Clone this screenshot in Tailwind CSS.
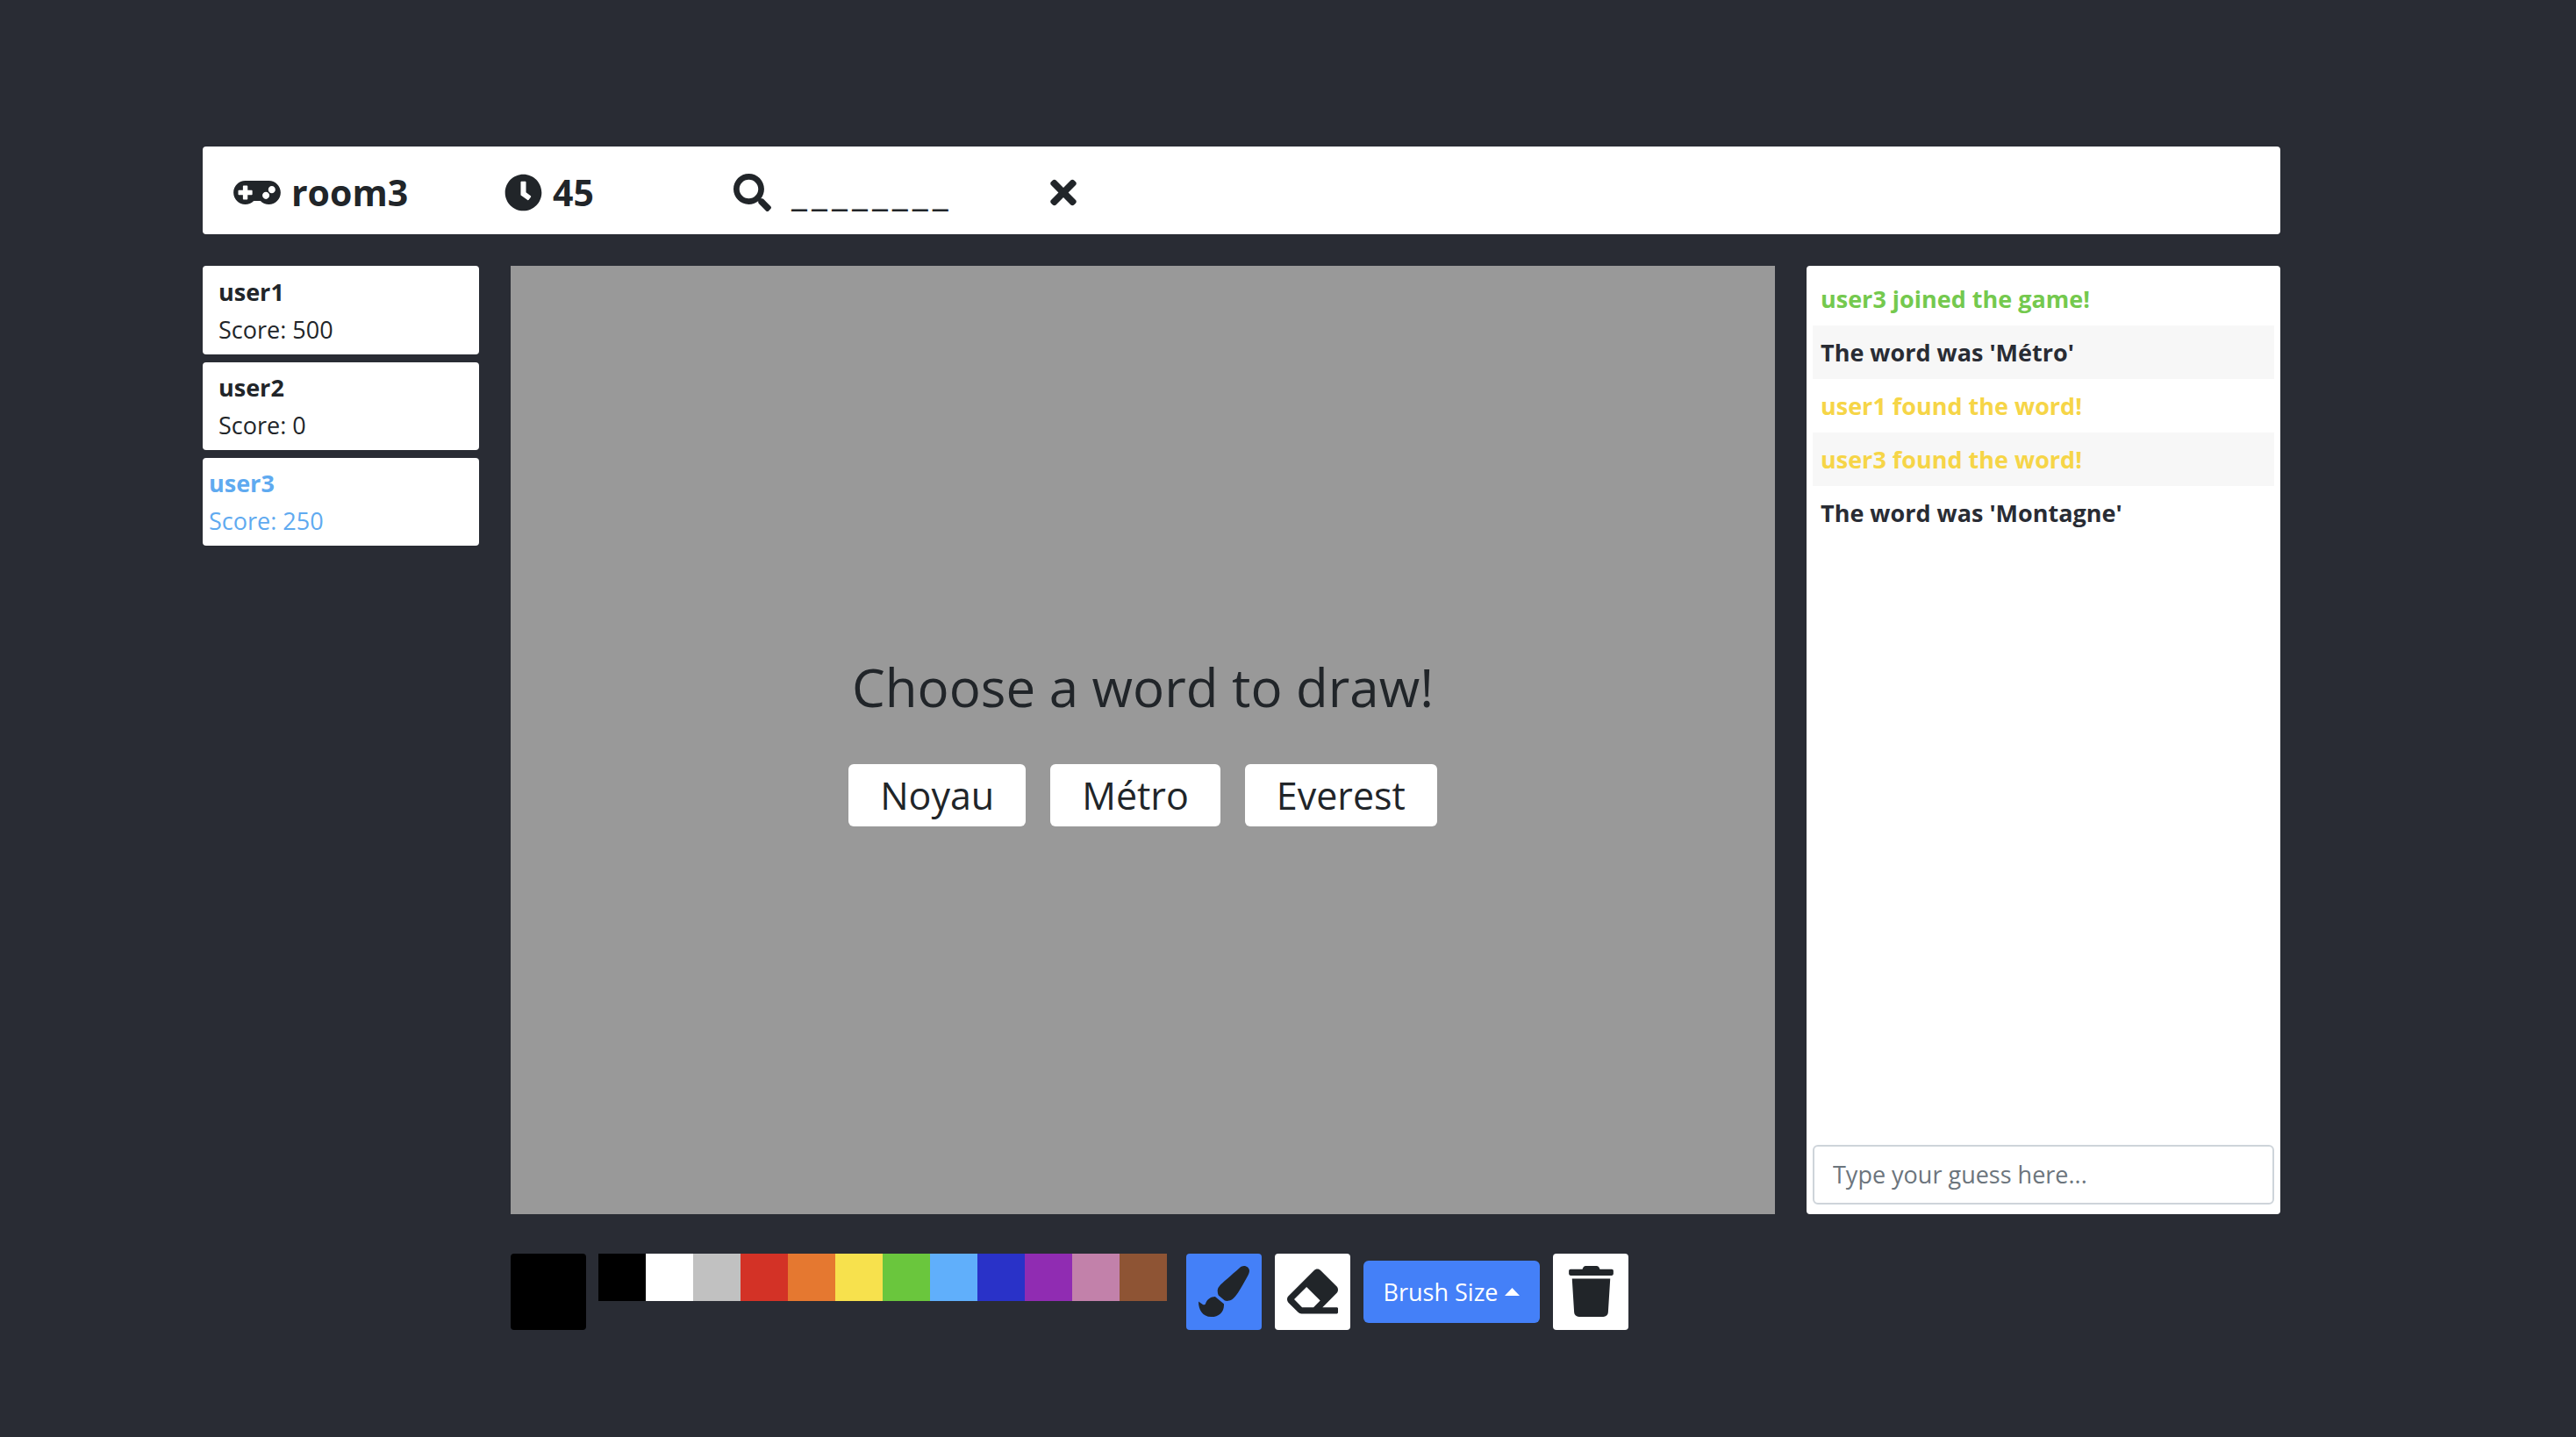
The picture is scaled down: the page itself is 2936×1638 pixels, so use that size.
<!DOCTYPE html>
<html lang="en">
<head>
<meta charset="utf-8">
<meta name="viewport" content="width=device-width, initial-scale=1">
<title>room3</title>
<script src="https://cdn.jsdelivr.net/npm/@tailwindcss/browser@4"></script>
</head>
<body class="min-h-screen bg-[#292c34] pt-[167px] pr-[337px] pb-[122px] pl-[231px] font-['Open_Sans','Noto_Sans',sans-serif] text-[27px] leading-[43px] text-[#212529]">

  <header class="mb-9 grid h-[100px] grid-cols-[309px_261px_361px_1fr] items-center rounded bg-white pt-1 pl-[35px] text-[41px] font-bold">
    <h1 class="flex items-center gap-3">
      <svg class="h-[43px] w-[54px]" viewBox="0 0 640 512" fill="currentColor" aria-hidden="true"><path d="M480 96H160C71.600 96 0 167.600 0 256s71.600 160 160 160c44.800 0 85.200-18.400 114.200-48h91.500c29 29.600 69.500 48 114.200 48 88.400 0 160-71.600 160-160S568.400 96 480 96zM256 276c0 6.600-5.400 12-12 12h-52v52c0 6.600-5.400 12-12 12h-40c-6.600 0-12-5.400-12-12v-52H76c-6.600 0-12-5.400-12-12v-40c0-6.600 5.400-12 12-12h52v-52c0-6.600 5.400-12 12-12h40c6.600 0 12 5.400 12 12v52h52c6.600 0 12 5.400 12 12v40zm184 68c-26.500 0-48-21.500-48-48s21.500-48 48-48 48 21.500 48 48-21.500 48-48 48zm80-80c-26.500 0-48-21.500-48-48s21.500-48 48-48 48 21.500 48 48-21.500 48-48 48z"/></svg>
      room3
    </h1>
    <div class="flex items-center gap-3">
      <svg class="size-[43px]" viewBox="0 0 512 512" fill="currentColor" aria-hidden="true"><path d="M256 8C119 8 8 119 8 256s111 248 248 248 248-111 248-248S393 8 256 8zm57.100 350.100L224.900 294c-3.100-2.300-4.900-5.900-4.900-9.700V116c0-6.600 5.400-12 12-12h48c6.600 0 12 5.400 12 12v137.700l63.500 46.200c5.400 3.900 6.500 11.400 2.600 16.800l-28.200 38.800c-3.900 5.300-11.400 6.500-16.800 2.600z"/></svg>
      <span>45</span>
    </div>
    <div class="flex items-center gap-[23px]">
      <svg class="size-[43px]" viewBox="0 0 512 512" fill="currentColor" aria-hidden="true"><path d="M505 442.700L405.300 343c-4.500-4.500-10.600-7-17-7H372c27.600-35.300 44-79.700 44-128C416 93.100 322.900 0 208 0S0 93.100 0 208s93.100 208 208 208c48.300 0 92.700-16.400 128-44v16.300c0 6.400 2.500 12.500 7 17l99.700 99.700c9.400 9.400 24.600 9.400 33.900 0l28.300-28.300c9.400-9.400 9.400-24.600.1-34zM208 336c-70.700 0-128-57.200-128-128 0-70.700 57.200-128 128-128 70.700 0 128 57.200 128 128 0 70.700-57.200 128-128 128z"/></svg>
      <div class="flex gap-[5px] font-normal">
        <span>_</span><span>_</span><span>_</span><span>_</span><span>_</span><span>_</span><span>_</span><span>_</span>
      </div>
    </div>
    <button type="button" aria-label="Leave room" class="w-fit">
      <svg class="h-[43px] w-[30px]" viewBox="0 0 352 512" fill="currentColor" aria-hidden="true"><path d="M242.720 256l100.070-100.070c12.280-12.280 12.280-32.190 0-44.480l-22.240-22.240c-12.280-12.280-32.190-12.280-44.480 0L176 189.280 75.930 89.210c-12.280-12.280-32.190-12.280-44.480 0L9.210 111.450c-12.280 12.280-12.280 32.190 0 44.480L109.280 256 9.210 356.070c-12.280 12.280-12.280 32.190 0 44.480l22.240 22.240c12.280 12.280 32.200 12.280 44.480 0L176 322.720l100.070 100.070c12.280 12.280 32.200 12.280 44.480 0l22.240-22.240c12.280-12.280 12.280-32.190 0-44.480L242.720 256z"/></svg>
    </button>
  </header>

  <main class="grid grid-cols-[315px_1fr_540px] gap-x-9 gap-y-[45px]">
    <ul class="flex flex-col gap-[9px]">
      <li class="rounded bg-white px-[18px] pt-2 pb-[7px]"><p class="font-bold">user1</p><p>Score: 500</p></li>
      <li class="rounded bg-white px-[18px] py-[7px]"><p class="font-bold">user2</p><p>Score: 0</p></li>
      <li class="rounded bg-white px-[7px] py-[7px] text-[#5faaf0]"><p class="font-bold">user3</p><p>Score: 250</p></li>
    </ul>

    <section class="flex aspect-[4/3] flex-col items-center justify-center gap-[50px] bg-[#999]">
      <h2 class="text-[60px] leading-[76px]">Choose a word to draw!</h2>
      <div class="flex gap-7">
        <button type="button" class="h-[71px] rounded-md bg-white px-9 text-[43px]">Noyau</button>
        <button type="button" class="h-[71px] rounded-md bg-white px-9 text-[43px]">Métro</button>
        <button type="button" class="h-[71px] rounded-md bg-white px-9 text-[43px]">Everest</button>
      </div>
    </section>

    <aside class="flex flex-col justify-between rounded bg-white px-[7px] pt-[7px] pb-[11px]">
      <ul class="font-bold">
        <li class="px-[9px] py-[9px] text-[#74c94e]">user3 joined the game!</li>
        <li class="bg-[#f7f7f7] px-[9px] py-[9px] text-[#292c34]">The word was 'Métro'</li>
        <li class="px-[9px] py-[9px] text-[#f6d547]">user1 found the word!</li>
        <li class="bg-[#f7f7f7] px-[9px] py-[9px] text-[#f6d547]">user3 found the word!</li>
        <li class="px-[9px] py-[9px] text-[#292c34]">The word was 'Montagne'</li>
      </ul>
      <input type="text" aria-label="Your guess" placeholder="Type your guess here..." class="h-[68px] w-full rounded-md border-2 border-[#ced4da] px-[21px] placeholder:text-[#6c757d]">
    </aside>

    <div class="col-start-2 flex items-start">
      <div class="mr-[14px] h-[87px] w-[86px] rounded bg-black"></div>
      <div class="mr-[22px] flex">
        <button type="button" aria-label="Black" class="size-[54px] bg-black"></button>
        <button type="button" aria-label="White" class="size-[54px] bg-white"></button>
        <button type="button" aria-label="Gray" class="size-[54px] bg-[#c1c1c1]"></button>
        <button type="button" aria-label="Red" class="size-[54px] bg-[#d33226]"></button>
        <button type="button" aria-label="Orange" class="size-[54px] bg-[#e57830]"></button>
        <button type="button" aria-label="Yellow" class="size-[54px] bg-[#f7e14d]"></button>
        <button type="button" aria-label="Green" class="size-[54px] bg-[#6ac63d]"></button>
        <button type="button" aria-label="Light blue" class="size-[54px] bg-[#60affb]"></button>
        <button type="button" aria-label="Blue" class="size-[54px] bg-[#2932c8]"></button>
        <button type="button" aria-label="Purple" class="size-[54px] bg-[#902cb2]"></button>
        <button type="button" aria-label="Pink" class="size-[54px] bg-[#c281aa]"></button>
        <button type="button" aria-label="Brown" class="size-[54px] bg-[#8e5434]"></button>
      </div>
      <div class="flex items-center gap-[15px]">
        <button type="button" aria-label="Brush" class="flex h-[87px] w-[86px] items-center justify-center rounded bg-[#4480f8]">
          <svg class="size-[58px]" viewBox="0 0 512 512" fill="currentColor" aria-hidden="true"><path d="M167.020 309.340c-40.120 2.580-76.530 17.860-97.190 72.300-2.350 6.210-8 9.980-14.590 9.980-11.110 0-45.460-27.670-55.250-34.350C0 439.620 37.930 512 128 512c75.860 0 128-43.770 128-120.190 0-3.110-.65-6.080-.97-9.130l-88.010-73.340zM457.890 0c-15.160 0-29.370 6.710-40.210 16.450C213.270 199.050 192 203.340 192 257.090c0 13.700 3.250 26.760 8.730 38.700l63.820 53.180c7.210 1.800 14.640 3.030 22.390 3.030 62.110 0 98.110-45.460 211.160-256.460 7.380-14.350 13.900-29.850 13.900-45.990C512 20.640 486 0 457.890 0z"/></svg>
        </button>
        <button type="button" aria-label="Eraser" class="flex h-[87px] w-[86px] items-center justify-center rounded bg-white">
          <svg class="size-[58px]" viewBox="0 0 512 512" fill="currentColor" aria-hidden="true"><path d="M497.941 273.941c18.745-18.745 18.745-49.137 0-67.882l-160-160c-18.745-18.745-49.136-18.746-67.883 0l-256 256c-18.745 18.745-18.745 49.137 0 67.882l96 96A48.004 48.004 0 0 0 144 480h356c6.627 0 12-5.373 12-12v-40c0-6.627-5.373-12-12-12H355.883l142.058-142.059zm-302.627-62.627l137.373 137.373L265.373 416H150.628l-80-80 124.686-124.686z"/></svg>
        </button>
        <button type="button" class="flex h-[71px] w-[201px] items-center justify-center gap-2 rounded-md bg-[#4480f8] text-white">
          Brush Size
          <svg class="h-[9px] w-[17px]" viewBox="0 0 17 9" fill="currentColor" aria-hidden="true"><path d="M0 9L8.500 0 17 9z"/></svg>
        </button>
        <button type="button" aria-label="Clear canvas" class="flex h-[87px] w-[86px] items-center justify-center rounded bg-white">
          <svg class="h-[58px] w-[51px]" viewBox="0 0 448 512" fill="currentColor" aria-hidden="true"><path d="M432 32H312l-9.400-18.700A24 24 0 0 0 281.100 0H166.800a23.720 23.720 0 0 0-21.400 13.300L136 32H16A16 16 0 0 0 0 48v32a16 16 0 0 0 16 16h416a16 16 0 0 0 16-16V48a16 16 0 0 0-16-16zM53.200 467a48 48 0 0 0 47.900 45h245.800a48 48 0 0 0 47.900-45L416 128H32z"/></svg>
        </button>
      </div>
    </div>
  </main>
</body>
</html>
